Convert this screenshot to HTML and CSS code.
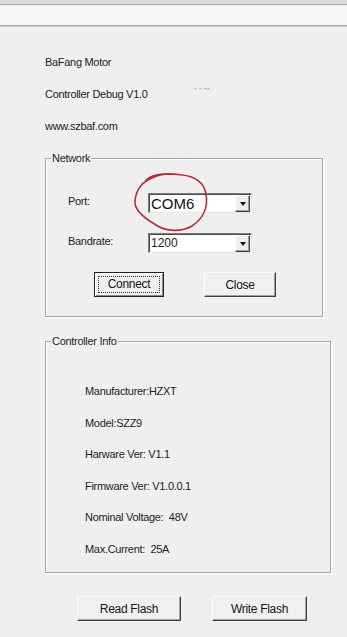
FILE: index.html
```html
<!DOCTYPE html>
<html>
<head>
<meta charset="utf-8">
<link rel="stylesheet" href="styles.css">
</head>
<body>
<div class="titlebar"></div>
<div class="toolbar"></div>
<main class="window">
  <div class="about">
    <p>BaFang Motor</p>
    <p>Controller Debug V1.0<span class="dots">'&nbsp;'&nbsp;'''</span></p>
    <p>www.szbaf.com</p>
  </div>

  <fieldset class="group network">
    <legend>Network</legend>
    <div class="form">
      <label class="lbl">Port:</label>
      <div class="combo"><span class="value big">COM6</span><span class="drop"><i class="arrow"></i></span></div>
      <label class="lbl">Bandrate:</label>
      <div class="combo"><span class="value">1200</span><span class="drop"><i class="arrow"></i></span></div>
    </div>
    <div class="actions">
      <button class="btn default connect"><span class="focus">Connect</span></button>
      <button class="btn close">Close</button>
    </div>
    <svg class="scribble" width="84" height="68" viewBox="0 0 84 68">
      <path d="M16 10 C24 3, 40 3, 52 5 C64 6, 74 12, 76 24 C78 36, 74 48, 62 56 C52 62, 36 62, 26 55 C14 48, 4 40, 5 31 C6 20, 12 12, 22 8 C28 5, 34 4, 40 4" fill="none" stroke="#b3303b" stroke-width="1.6" stroke-linecap="round"/>
    </svg>
  </fieldset>

  <fieldset class="group info">
    <legend>Controller Info</legend>
    <ul class="specs">
      <li>Manufacturer:HZXT</li>
      <li>Model:SZZ9</li>
      <li>Harware Ver: V1.1</li>
      <li>Firmware Ver: V1.0.0.1</li>
      <li>Nominal Voltage:&nbsp; 48V</li>
      <li>Max.Current:&nbsp; 25A</li>
    </ul>
  </fieldset>

  <div class="bottom-actions">
    <button class="btn read">Read Flash</button>
    <button class="btn write">Write Flash</button>
  </div>
</main>
</body>
</html>
```

FILE: styles.css
```css
html, body {
  margin: 0;
  padding: 0;
  background: #efefef;
}
body {
  width: 347px;
  height: 637px;
  overflow: hidden;
  font-family: "Liberation Sans", Arial, sans-serif;
  font-size: 11px;
  letter-spacing: -0.3px;
  color: #1c1c1c;
}
.titlebar {
  height: 4px;
  background: #dadada;
  border-bottom: 1px solid #a8a8a8;
}
.toolbar {
  height: 20px;
  background: #f5f5f7;
  border-bottom: 1px solid #a3a3a3;
  box-shadow: 0 1px 0 #d4d4d4;
}
.window {
  padding-left: 45px;
}
.about {
  margin-top: 20px;
}
.about p {
  margin: 0;
  height: 32px;
  line-height: 32px;
}
.dots {
  display: inline-block;
  margin-left: 47px;
  font-size: 8px;
  line-height: 8px;
  vertical-align: 5px;
  color: #6a6a6a;
  letter-spacing: 0.5px;
}
.group {
  position: relative;
  margin: 0;
  padding: 0;
  border: 1px solid #a6a6a6;
  box-shadow: inset 1px 1px 0 #fff, 1px 1px 0 #fff;
  min-width: 0;
}
.group legend {
  margin-left: 5px;
  padding: 0 1px;
  line-height: 13px;
  height: 13px;
}
.network {
  width: 276px;
  margin-top: 10px;
  padding-bottom: 19px;
}
.form {
  display: grid;
  grid-template-columns: 80px 104px;
  grid-auto-rows: 20px;
  row-gap: 20px;
  padding-left: 22px;
  margin-top: 28px;
}
.lbl {
  line-height: 16px;
}
.combo {
  display: flex;
  background: #fff;
  border-top: 1px solid #7e7e7e;
  border-left: 1px solid #7e7e7e;
  border-right: 1px solid #e6e6e6;
  border-bottom: 1px solid #e6e6e6;
  box-shadow: inset 1px 1px 0 #4a4a4a;
  padding: 1px 1px 0 2px;
}
.value {
  flex: 1;
  font-size: 12px;
  line-height: 17px;
  letter-spacing: 0;
}
.value.big {
  font-size: 15px;
  line-height: 17px;
  color: #111;
}
.drop {
  width: 15px;
  background: #f0f0f0;
  border-top: 1px solid #fff;
  border-left: 1px solid #fff;
  border-right: 1px solid #404040;
  border-bottom: 1px solid #404040;
  box-shadow: inset -1px -1px 0 #a0a0a0;
  display: flex;
  align-items: center;
  justify-content: center;
  box-sizing: border-box;
  height: 17px;
}
.arrow {
  width: 0;
  height: 0;
  border-left: 3.5px solid transparent;
  border-right: 3.5px solid transparent;
  border-top: 4px solid #111;
}
.actions {
  display: flex;
  gap: 40px;
  margin-top: 19px;
  padding-left: 48px;
}
.btn {
  font-family: inherit;
  font-size: 12px;
  letter-spacing: -0.3px;
  color: #151515;
  height: 25px;
  padding: 0;
  background: #f0f0f0;
  border-top: 1px solid #fff;
  border-left: 1px solid #fff;
  border-right: 1px solid #404040;
  border-bottom: 1px solid #404040;
  box-shadow: inset -1px -1px 0 #a0a0a0;
  border-radius: 0;
}
.connect {
  width: 70px;
}
.close {
  width: 72px;
}
.btn.default {
  border: 1px solid #222;
  box-shadow: inset 1px 1px 0 #fff, inset -1px -1px 0 #8a8a8a;
  padding: 3px;
}
.focus {
  display: block;
  height: 100%;
  box-sizing: border-box;
  border: 1px dotted #333;
  line-height: 15px;
}
.scribble {
  position: absolute;
  left: 84px;
  top: 5px;
}
.info {
  width: 284px;
  margin-top: 18px;
  padding-bottom: 7px;
}
.specs {
  list-style: none;
  margin: 28px 0 0 0;
  padding: 0 0 0 39px;
}
.specs li {
  height: 31.5px;
  line-height: 31.5px;
}
.bottom-actions {
  display: flex;
  gap: 31px;
  margin-top: 23px;
  padding-left: 32px;
}
.read {
  width: 104px;
}
.write {
  width: 95px;
}
```
